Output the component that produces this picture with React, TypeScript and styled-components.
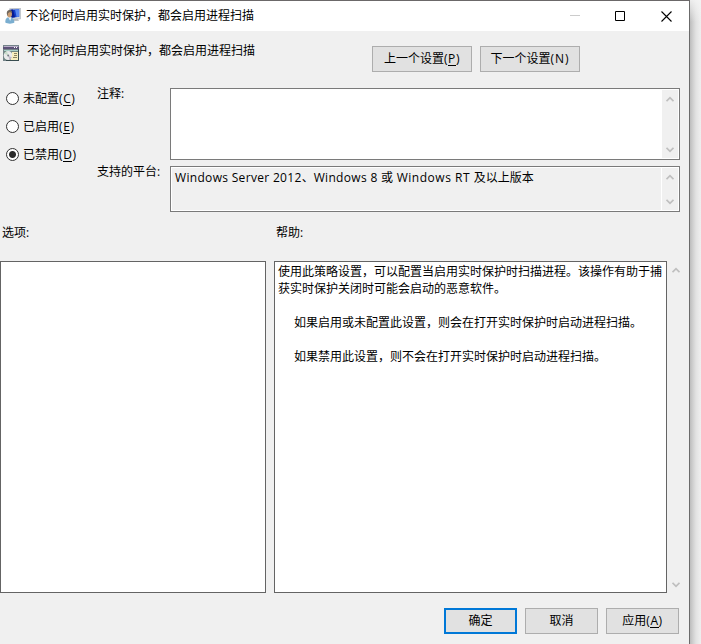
import React from "react";
import styled, { createGlobalStyle } from "styled-components";

const GlobalStyle = createGlobalStyle`
  * { box-sizing: border-box; }
  html, body, #root { height: 100%; }
  body {
    margin: 0;
    overflow: hidden;
    background: #f0f0f0;
    color: #000;
    font: 12px/16px "Open Sans", "Noto Sans CJK SC", sans-serif;
  }
`;

const Desktop = styled.div`
  display: flex;
  height: 644px;
  width: 701px;
`;

const Shadow = styled.div`
  flex: 1;
  background:
    linear-gradient(to bottom, rgba(244, 244, 244, 0.85), rgba(244, 244, 244, 0) 22px),
    linear-gradient(to right, #bcbcbc, #cfcfcf 25%, #e2e2e2 55%, #efefef);
`;

const Window = styled.div`
  width: 690px;
  height: 644px;
  display: flex;
  flex-direction: column;
  background: #f0f0f0;
  border-top: 1px solid #6b6869;
  border-right: 1px solid #6b6b6b;
`;

const TitleBar = styled.header`
  height: 30px;
  flex: none;
  display: flex;
  align-items: center;
  background: #fff;
  padding-left: 5px;
`;

const Title = styled.span`
  flex: 1;
  margin-left: 5px;
  white-space: nowrap;
`;

const Caption = styled.div<{ $nudge?: number }>`
  width: 46px;
  height: 30px;
  display: flex;
  align-items: center;
  justify-content: center;
  padding-left: ${(p) => p.$nudge ?? 0}px;
  svg { display: block; }
`;

const Heading = styled.div`
  height: 57px;
  flex: none;
  display: flex;
  align-items: flex-start;
  padding: 15px 0 0 3px;
`;

const HeadIcon = styled.div`
  height: 16px;
  margin-top: -1px;
`;

const Policy = styled.span`
  width: 345px;
  margin: -3px 0 0 8px;
`;

const Button = styled.button<{ $w: number; $primary?: boolean }>`
  width: ${(p) => p.$w}px;
  height: 26px;
  flex: none;
  padding: 0 0 1px;
  border: ${(p) => (p.$primary ? "2px solid #0078d7" : "1px solid #adadad")};
  border-radius: 0;
  background: #e1e1e1;
  color: #000;
  font: inherit;
  white-space: nowrap;
  & + & { margin-left: 8px; }
`;

const Key = styled.u`
  text-decoration: none;
  display: inline-block;
  height: 14px;
  line-height: 14px;
  border-bottom: 1px solid #000;
`;

const Settings = styled.section`
  height: 124px;
  flex: none;
  display: grid;
  grid-template-columns: 97px 73px 510px;
  grid-template-rows: 72px 46px;
  row-gap: 6px;
`;

const Radios = styled.div`
  grid-row: 1 / 3;
  display: flex;
  flex-direction: column;
  gap: 12px;
  padding: 3px 0 0 6px;
`;

const RadioRow = styled.label`
  display: flex;
  height: 16px;
  align-items: center;
  white-space: nowrap;
`;

const Dot = styled.span<{ $on?: boolean }>`
  width: 13px;
  height: 13px;
  margin: -2px 4px 0 0;
  border: 1px solid #333;
  border-radius: 50%;
  background: ${(p) => (p.$on ? "radial-gradient(circle, #2b2b2b 3px, #fff 4px)" : "#fff")};
`;

const Label = styled.span<{ $shift?: number }>`
  white-space: nowrap;
  margin-top: ${(p) => p.$shift ?? 0}px;
`;

const TextBox = styled.div<{ $disabled?: boolean }>`
  display: flex;
  border: 1px solid #7a7a7a;
  background: ${(p) => (p.$disabled ? "#f0f0f0" : "#fff")};
  box-shadow: inset 0 0 0 1px #fff;
  padding: 1px;
`;

const BoxText = styled.div`
  flex: 1;
  padding: 2px 0 0 3px;
  white-space: nowrap;
`;

const Latin = styled.span<{ $space?: number }>`
  letter-spacing: ${(p) => p.$space ?? 0.32}px;
`;

const ScrollBar = styled.div<{ $edge?: boolean }>`
  width: ${(p) => (p.$edge ? 17 : 16)}px;
  background: #f0f0f0;
  border-left: ${(p) => (p.$edge ? "1px solid #fff" : "0")};
  display: flex;
  flex-direction: column;
  justify-content: space-between;
  align-items: center;
  padding: 6px 1px 5px 0;
`;

const Captions = styled.div`
  height: 49px;
  flex: none;
  display: grid;
  grid-template-columns: 274px 1fr;
  padding: 13px 0 0 2px;
`;

const Panels = styled.section`
  height: 332px;
  flex: none;
  display: grid;
  grid-template-columns: 266px 393px 17px;
  column-gap: 8px;
`;

const Panel = styled.div`
  background: #fff;
  border: 1px solid #646464;
  padding: 1px 3px;
  line-height: 17px;
`;

const Line = styled.div<{ $indent?: boolean }>`
  height: 17px;
  white-space: nowrap;
  padding-left: ${(p) => (p.$indent ? 16 : 0)}px;
`;

const HelpScroll = styled(ScrollBar)`
  margin-left: -7px;
`;

const Footer = styled.footer`
  display: flex;
  justify-content: flex-end;
  padding: 15px 10px 0 0;
`;

const Arrow = ({ down }: { down?: boolean }) => (
  <svg width="8" height="6" viewBox="0 0 8 6">
    <path d={down ? "M0.5 0.8 4 4.3 7.5 0.8" : "M0.5 5.2 4 1.7 7.5 5.2"} fill="none" stroke="#bfbfbf" strokeWidth="1.8" />
  </svg>
);

const UserMonitorIcon = () => (
  <svg width="16" height="16" viewBox="0 0 16 16">
    <path d="M4.5.8 15.7.3v10.5L5 11.5z" fill="#d3d8de" stroke="#a2a9b2" strokeWidth=".6" />
    <path d="M5.4 1.7 14.2 1.2v7.6L5.4 9.9z" fill="#123fc9" />
    <path d="M10 1.4 14.2 1.2v7.6l-2.6.3z" fill="#5a8af0" />
    <path d="M5.4 1.7 8 1.5 10 9.2l-4.6.5z" fill="#071a8f" />
    <path d="M9 11.3h4l1 1.5H8z" fill="#a9afb5" />
    <path d="M.3 14.5c0-4 1.5-5.3 4.1-5.3s5 1.3 5 5.3c-2 1.5-7 1.5-9.1 0z" fill="#7aaed0" />
    <path d="m3.2 9 2 4 1.4-3.8z" fill="#e4f0f7" />
    <ellipse cx="4.5" cy="6.1" rx="2.5" ry="3.3" fill="#c79b72" />
    <path d="M1.8 6C1.5 3.2 3 2 4.6 2.1 6.4 2.1 7.3 3.3 7 5L4.8 4.1 3 5.2 2.7 8z" fill="#71675c" />
  </svg>
);

const PolicyIcon = () => (
  <svg width="16" height="16" viewBox="0 0 16 16" shapeRendering="crispEdges">
    <path d="M0 0h16v16H0z" fill="#75858a" />
    <path d="M1 1h14v1H1z" fill="#b9aec9" />
    <path d="M0 2h16v2H0z" fill="#5d5278" />
    <path d="M11 2h1v1h-1zM13 2h1v1h-1z" fill="#fff" />
    <path d="M1 5h14v1H1z" fill="#a9cfca" />
    <path d="M1 6h14v9H1z" fill="#6f8784" />
    <g shapeRendering="auto">
      <circle cx="5.2" cy="10.6" r="4.5" fill="#e9eaeb" />
      <path d="m5.2 10.6-4-2.2A4.5 4.5 0 0 1 4 6.3z" fill="#c8dccb" />
      <path d="m5.2 10.6 4 2.2a4.5 4.5 0 0 1-2.8 2.1z" fill="#c0b9c8" />
      <circle cx="5.2" cy="10.6" r="1" fill="#727b80" />
    </g>
    <path d="M9 7h6v8H8v-2h1z" fill="#f6eebf" />
    <path d="M11 8h3v1h-3zM11 10h3v1h-3zM10 12h4v1h-4z" fill="#8b8464" />
    <path d="M15 4h1v12H3v-1h12z" fill="#384d50" />
  </svg>
);

const radios = [
  { text: "未配置", key: "C" },
  { text: "已启用", key: "E" },
  { text: "已禁用", key: "D", on: true },
];

const Mnemonic = ({ k }: { k: string }) => (
  <Latin $space={0.6}>(<Key>{k}</Key>)</Latin>
);

const policyName = "不论何时启用实时保护，都会启用进程扫描";

export default function App() {
  return (
    <Desktop>
      <GlobalStyle />
      <Window>
        <TitleBar>
          <UserMonitorIcon />
          <Title>{policyName}</Title>
          <Caption $nudge={2}>
            <svg width="10" height="10"><path d="M0 4.5h10" stroke="#ccc" /></svg>
          </Caption>
          <Caption>
            <svg width="10" height="10"><path d="M.5.5h9v9h-9z" fill="none" stroke="#000" /></svg>
          </Caption>
          <Caption>
            <svg width="11" height="11"><path d="m.5.5 10 10m0-10-10 10" stroke="#000" strokeWidth="1.1" /></svg>
          </Caption>
        </TitleBar>
        <Heading>
          <HeadIcon><PolicyIcon /></HeadIcon>
          <Policy>{policyName}</Policy>
          <Button $w={100}>上一个设置<Mnemonic k="P" /></Button>
          <Button $w={100}>下一个设置<Latin $space={0.9}>(N)</Latin></Button>
        </Heading>
        <Settings>
          <Radios>
            {radios.map((r) => (
              <RadioRow key={r.key}>
                <Dot $on={r.on} />
                <span>{r.text}<Mnemonic k={r.key} /></span>
              </RadioRow>
            ))}
          </Radios>
          <Label $shift={-2}>注释:</Label>
          <TextBox>
            <BoxText />
            <ScrollBar><Arrow /><Arrow down /></ScrollBar>
          </TextBox>
          <Label $shift={-2}>支持的平台:</Label>
          <TextBox $disabled>
            <BoxText>
              <Latin>Windows Server 2012</Latin>、<Latin>Windows 8 </Latin>或<Latin $space={0.53}> Windows RT </Latin>及以上版本
            </BoxText>
            <ScrollBar $edge><Arrow /><Arrow down /></ScrollBar>
          </TextBox>
        </Settings>
        <Captions>
          <Label>选项:</Label>
          <Label>帮助:</Label>
        </Captions>
        <Panels>
          <Panel />
          <Panel>
            <Line>使用此策略设置，可以配置当启用实时保护时扫描进程。该操作有助于捕</Line>
            <Line>获实时保护关闭时可能会启动的恶意软件。</Line>
            <Line />
            <Line $indent>如果启用或未配置此设置，则会在打开实时保护时启动进程扫描。</Line>
            <Line />
            <Line $indent>如果禁用此设置，则不会在打开实时保护时启动进程扫描。</Line>
          </Panel>
          <HelpScroll><Arrow /><Arrow down /></HelpScroll>
        </Panels>
        <Footer>
          <Button $w={73} $primary>确定</Button>
          <Button $w={73}>取消</Button>
          <Button $w={73}>应用<Mnemonic k="A" /></Button>
        </Footer>
      </Window>
      <Shadow />
    </Desktop>
  );
}
